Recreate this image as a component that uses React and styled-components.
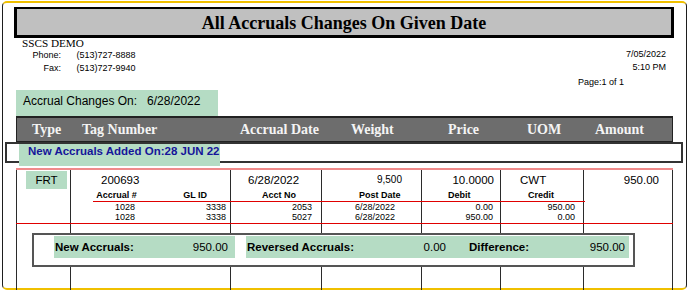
import styled, { createGlobalStyle } from 'styled-components';

const GlobalStyle = createGlobalStyle`
  html, body {
    margin: 0;
    padding: 0;
    background: #fff;
  }
  body {
    font-family: "Liberation Sans", Arial, sans-serif;
    color: #000;
  }
`;

const GREEN = '#b5dcc4';
const COLS = '54px 160px 91px 100px 79px 83px 90px';
const RULES = [0, 54, 214, 305, 405, 484, 567, 656];

const Frame = styled.div`
    box-sizing: border-box;
    width: 685px;
    height: 289px;
    margin: 1px 0 0 2px;
    border: 1px solid #1e1e1e;
    border-top: 2px solid #f0c000;
    border-bottom: 2px solid #f0c000;
    border-radius: 5px;
`

const TitleBar = styled.div`
    box-sizing: border-box;
    width: 660px;
    height: 31px;
    margin: 4px 0 0 11px;
    padding-top: 2px;
    background-color: #c0c0c0;
    border: solid #000;
    border-width: 2px 3px 3px 3px;
    font: bold 18px/24px "Liberation Serif", "Times New Roman", serif;
    text-align: center;
`

const Company = styled.div`
    display: flex;
    justify-content: space-between;
    height: 52px;
`

const CompanyInfo = styled.div`
    padding-left: 19px;
`

const CompanyName = styled.div`
    font: 11.2px/10px "Liberation Serif", "Times New Roman", serif;
`

const Contact = styled.div`
    display: grid;
    grid-template-columns: 39px auto;
    column-gap: 15.5px;
    margin-top: 1px;
    font-size: 9px;
    line-height: 13px;

    & > span:nth-child(odd) {
        text-align: right;
    }
`

const Stamp = styled.div`
    margin-top: 10px;
    padding-right: 20px;
    font-size: 9px;
    line-height: 13px;
    text-align: right;
`

const PageNo = styled.div`
    margin: 2px 42px 0 0;
`

const ChangesOn = styled.div`
    width: 202px;
    height: 26px;
    box-sizing: border-box;
    margin-left: 13px;
    padding: 0 0 4px 7px;
    background-color: ${GREEN};
    font-size: 12px;
    line-height: 22px;

    & > span {
        margin-left: 10px;
    }
`

const Table = styled.div`
    width: 657px;
    margin-left: 13px;
`

const HeaderBar = styled.div`
    display: grid;
    grid-template-columns: ${COLS};
    box-sizing: border-box;
    height: 26px;
    background-color: #6d6d6d;
    border: 1px solid #222;
    border-top-width: 2px;
    color: #f4f4f4;
    font: bold 14px/23px "Liberation Serif", "Times New Roman", serif;
    white-space: nowrap;
`

const HeadCell = styled.div`
    padding-left: ${props => props.pad}px;
`

const AddedBox = styled.div`
    margin: 0 -10px 0 -11px;
    border: 2px solid #333;
    background-color: #fff;
`

const AddedLabel = styled.div`
    width: 201px;
    height: 22px;
    box-sizing: border-box;
    margin: 0 0 -5px 12px;
    padding-left: 9px;
    background-color: ${GREEN};
    color: #15159a;
    font-weight: bold;
    font-size: 11.5px;
    line-height: 15px;
    white-space: nowrap;
`

const Body = styled.div`
    height: 128px;
    background: ${RULES.map(x => `linear-gradient(#2b2b2b, #2b2b2b) ${x}px 0 / 1px 100% no-repeat`).join(', ')};
`

const PinkRule = styled.div`
    height: 2px;
    margin-top: 5px;
    background-color: #f08a8a;
`

const MainRow = styled.div`
    display: grid;
    grid-template-columns: ${COLS};
    height: 20px;
    box-sizing: border-box;
    padding-top: 1px;
    font-size: 11.5px;
    line-height: 19px;
`

const Cell = styled.div`
    text-align: ${props => props.right ? 'right' : 'left'};
    padding: ${props => props.right ? `0 ${props.pad}px 0 0` : `0 0 0 ${props.pad}px`};
    font-size: ${props => props.small ? '10px' : 'inherit'};
    line-height: ${props => props.small ? '17px' : 'inherit'};
`

const TypeTag = styled.div`
    width: 41px;
    height: 18px;
    margin-left: 10px;
    background-color: ${GREEN};
    text-align: center;
    line-height: 18px;
`

const SubTable = styled.div`
    display: grid;
    grid-template-columns: 47px 90px 91px 99px 80px 85px;
    width: 492px;
    margin-left: 77px;
    font-size: 9px;
    line-height: 10px;
    white-space: nowrap;
`

const SubHead = styled.div`
    font-weight: bold;
    line-height: 11px;
    border-bottom: 1px solid #e00000;
    text-align: ${props => props.align};
    padding: ${props => props.align === 'right' ? `0 ${props.pad}px 0 0` : `0 0 0 ${props.pad}px`};
`

const SubCell = styled.div`
    text-align: ${props => props.align};
    padding: ${props => props.align === 'right' ? `0 ${props.pad}px 0 0` : `0 0 0 ${props.pad}px`};
`

const RedRule = styled.div`
    height: 1px;
    margin-top: 1px;
    background-color: #e00000;
`

const Summary = styled.div`
    display: flex;
    gap: 11px;
    box-sizing: border-box;
    width: 603px;
    height: 34px;
    margin: 9px 0 0 16px;
    padding: 1px 0 0 20px;
    border: 2px solid #555;
    background-color: #fff;
`

const SumBand = styled.div`
    display: flex;
    width: ${props => props.width}px;
    height: 22px;
    background-color: ${GREEN};
    font-size: 11.5px;
    line-height: 22px;
`

const SumCell = styled.div`
    display: flex;
    justify-content: space-between;
    box-sizing: border-box;
    flex: ${props => props.grow ? 1 : 'none'};
    width: ${props => props.width ? `${props.width}px` : 'auto'};
    margin-left: ${props => props.gap || 0}px;
    padding: 0 ${props => props.right || 0}px 0 ${props => props.left || 0}px;

    & > b {
        font-weight: bold;
    }
`

const headers = [
    { label: 'Type', pad: 15 },
    { label: 'Tag Number', pad: 11 },
    { label: 'Accrual Date', pad: 9 },
    { label: 'Weight', pad: 29 },
    { label: 'Price', pad: 26 },
    { label: 'UOM', pad: 26 },
    { label: 'Amount', pad: 11 },
];

const subCols = [
    { head: 'Accrual #', hAlign: 'center', hPad: 0, align: 'right', pad: 5 },
    { head: 'GL ID', hAlign: 'right', hPad: 23, align: 'right', pad: 4 },
    { head: 'Acct No', hAlign: 'right', hPad: 25, align: 'right', pad: 9 },
    { head: 'Post Date', hAlign: 'left', hPad: 38, align: 'left', pad: 34 },
    { head: 'Debit', hAlign: 'left', hPad: 28, align: 'right', pad: 7 },
    { head: 'Credit', hAlign: 'left', hPad: 28, align: 'right', pad: 10 },
];

const entries = [
    ['1028', '3338', '2053', '6/28/2022', '0.00', '950.00'],
    ['1028', '3338', '5027', '6/28/2022', '950.00', '0.00'],
];

const App = () => {
    return (
        <>
            <GlobalStyle />
            <Frame>
                <TitleBar>All Accruals Changes On Given Date</TitleBar>
                <Company>
                    <CompanyInfo>
                        <CompanyName>SSCS DEMO</CompanyName>
                        <Contact>
                            <span>Phone:</span><span>(513)727-8888</span>
                            <span>Fax:</span><span>(513)727-9940</span>
                        </Contact>
                    </CompanyInfo>
                    <Stamp>
                        <div>7/05/2022</div>
                        <div>5:10 PM</div>
                        <PageNo>Page:1 of 1</PageNo>
                    </Stamp>
                </Company>
                <ChangesOn>Accrual Changes On:<span>6/28/2022</span></ChangesOn>
                <Table>
                    <HeaderBar>
                        {headers.map((h) => (
                            <HeadCell key={h.label} pad={h.pad}>{h.label}</HeadCell>
                        ))}
                    </HeaderBar>
                    <AddedBox>
                        <AddedLabel>New Accruals Added On:28 JUN 22</AddedLabel>
                    </AddedBox>
                    <Body>
                        <PinkRule />
                        <MainRow>
                            <Cell><TypeTag>FRT</TypeTag></Cell>
                            <Cell pad={31}>200693</Cell>
                            <Cell pad={18}>6/28/2022</Cell>
                            <Cell right pad={19} small>9,500</Cell>
                            <Cell right pad={6}>10.0000</Cell>
                            <Cell pad={20}>CWT</Cell>
                            <Cell right pad={14}>950.00</Cell>
                        </MainRow>
                        <SubTable>
                            {subCols.map((c) => (
                                <SubHead key={c.head} align={c.hAlign} pad={c.hPad}>{c.head}</SubHead>
                            ))}
                            {entries.map((row, i) => row.map((v, j) => (
                                <SubCell key={`${i}-${j}`} align={subCols[j].align} pad={subCols[j].pad}>{v}</SubCell>
                            )))}
                        </SubTable>
                        <RedRule />
                        <Summary>
                            <SumBand width={181}>
                                <SumCell grow left={1} right={7}><b>New Accruals:</b><span>950.00</span></SumCell>
                            </SumBand>
                            <SumBand width={383}>
                                <SumCell width={200} left={1}><b>Reversed Accruals:</b><span>0.00</span></SumCell>
                                <SumCell grow gap={23} right={4}><b>Difference:</b><span>950.00</span></SumCell>
                            </SumBand>
                        </Summary>
                    </Body>
                </Table>
            </Frame>
        </>
    );
};

export default App;
